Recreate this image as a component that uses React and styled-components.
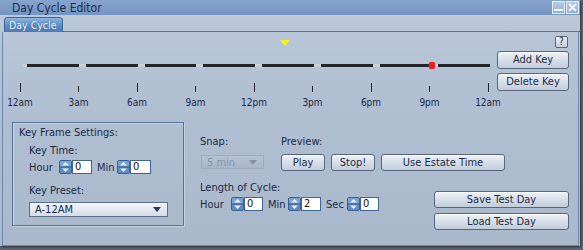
import styled, { createGlobalStyle } from "styled-components";

const GlobalStyle = createGlobalStyle`
  html, body {
    margin: 0;
    padding: 0;
  }
  body {
    width: 583px;
    height: 250px;
    overflow: hidden;
    background: #5d6570;
    font-family: "DejaVu Sans Condensed", "DejaVu Sans", "Liberation Sans", sans-serif;
    font-stretch: condensed;
    font-size: 11px;
    color: #1b2a44;
  }
`;

const HOURS = ["12am", "3am", "6am", "9am", "12pm", "3pm", "6pm", "9pm", "12am"];
const TRACK_START = 19;
const TRACK_WIDTH = 468;

const Window = styled.div`
  width: 580px;
  height: 246px;
  display: flex;
  flex-direction: column;
  background: linear-gradient(#bccadb, #b0bfd1 40%, #a9b8cb);
  box-shadow: 1px 1px 2px rgba(0, 0, 0, 0.5);
`;

const TitleBar = styled.div`
  height: 15px;
  display: flex;
  align-items: center;
  padding-left: 12px;
  background: linear-gradient(#87a4cd, #7393c2);
  font-size: 12px;
  color: #1a2b4e;
`;

const TitleText = styled.span`
  flex: 1;
`;

const TitleIcons = styled.div`
  display: flex;
  gap: 1px;
  margin-right: 1px;
`;

const TitleIcon = styled.div`
  width: 13px;
  height: 13px;
  box-sizing: border-box;
  border: 1px solid #e6eef8;
  background: linear-gradient(#b7cde6, #8fb0d6);
  display: flex;
  align-items: center;
  justify-content: center;
`;

const TabStrip = styled.div`
  display: flex;
  align-items: flex-end;
  height: 17px;
  padding-left: 4px;
`;

const Tab = styled.div`
  width: 59px;
  height: 15px;
  box-sizing: border-box;
  border: 1px solid #3c6499;
  border-bottom: none;
  border-radius: 4px 4px 0 0;
  background: linear-gradient(#8cb6e2, #5a8cc8 55%, #4a7bb9);
  color: #fff;
  text-shadow: 0 0 1px #1d3b66;
  padding-left: 4px;
  font-size: 10.5px;
  line-height: 14px;
`;

const TabLine = styled.div`
  flex: 1;
  height: 1px;
  background: #4f74a6;
`;

const Panel = styled.div`
  flex: 1;
  margin: 0 1px 0 2px;
  border: 1px solid #6d88ae;
  border-top: none;
  display: flex;
  flex-direction: column;
`;

const TopRow = styled.div`
  height: 86px;
  display: flex;
`;

const Timeline = styled.div`
  position: relative;
  width: 494px;
`;

const Track = styled.div`
  position: relative;
  display: flex;
  margin: 32px 0 0 ${TRACK_START}px;
  width: ${TRACK_WIDTH}px;
  height: 3px;
  background: #c9ced4;
`;

const Segment = styled.div`
  flex: 1;
  margin-left: ${(p) => (p.$first ? 5 : 7)}px;
  background: #222427;
`;

const KeyDot = styled.div`
  position: absolute;
  top: -2px;
  width: 6px;
  height: 7px;
  margin-left: -3px;
  border-radius: 2px;
  background: #f01c1c;
  box-shadow: 0 0 1px #ff5a5a;
`;

const TimeMarker = styled.svg`
  position: absolute;
  top: 8px;
  margin-left: -5px;
`;

const Scale = styled.div`
  display: flex;
  justify-content: space-between;
  width: ${TRACK_WIDTH + 30}px;
  margin: 16px 0 0 2px;
`;

const ScaleItem = styled.div`
  width: 30px;
  display: flex;
  flex-direction: column;
  align-items: center;
`;

const Tick = styled.div`
  width: 1px;
  height: ${(p) => (p.$major ? 9 : 6)}px;
  margin-top: ${(p) => (p.$major ? 0 : 3)}px;
  background: #1f2226;
`;

const TickLabel = styled.div`
  margin-top: 5px;
  font-size: 10px;
  line-height: 12px;
`;

const SideCol = styled.div`
  width: 72px;
  display: flex;
  flex-direction: column;
  align-items: flex-end;
`;

const Button = styled.button`
  box-sizing: border-box;
  width: ${(p) => p.$w}px;
  height: ${(p) => p.$h || 16}px;
  margin: 0;
  padding: 0;
  border: 1px solid #55667d;
  border-radius: 3px;
  background: linear-gradient(#eef3f8, #d6dee8 50%, #c2cdda);
  box-shadow: inset 0 1px 0 #fbfdff;
  font-family: inherit;
  font-stretch: condensed;
  font-size: 11px;
  color: #1b2b45;
  line-height: 14px;
`;

const HelpButton = styled(Button)`
  margin: 4px 1px 0 0;
  width: 13px;
  height: 12px;
  font-size: 10px;
  line-height: 10px;
  border-radius: 2px;
`;

const SideButton = styled(Button)`
  margin: ${(p) => p.$mt}px 0 0 0;
`;

const BottomRow = styled.div`
  flex: 1;
  display: flex;
`;

const GroupBox = styled.div`
  margin: 4px 0 0 9px;
  width: 172px;
  height: 104px;
  box-sizing: border-box;
  border: 1px solid #58739b;
  box-shadow: 1px 1px 0 #c6d2e0, inset 1px 1px 0 #c6d2e0;
  padding: 3px 0 0 6px;
`;

const Label = styled.div`
  line-height: 13px;
  margin: ${(p) => p.$m || 0};
`;

const FieldRow = styled.div`
  display: flex;
  align-items: center;
  margin: ${(p) => p.$m || 0};
`;

const FieldLabel = styled.span`
  width: ${(p) => p.$w}px;
`;

const SpinBox = styled.svg`
  display: block;
  flex: none;
`;

const NumInput = styled.div`
  box-sizing: border-box;
  width: ${(p) => p.$w}px;
  height: 14px;
  border: 1px solid #3f6496;
  background: #fff;
  padding-left: 2px;
  line-height: 12px;
  color: #111;
`;

const Dropdown = styled.div`
  box-sizing: border-box;
  width: ${(p) => p.$w}px;
  height: ${(p) => p.$h}px;
  display: flex;
  align-items: center;
  justify-content: space-between;
  padding: 0 6px 0 5px;
  border: 1px solid ${(p) => (p.$disabled ? "#9eabbd" : "#5d6f88")};
  background: ${(p) =>
    p.$disabled ? "linear-gradient(#b5c2d3, #a8b6c9)" : "linear-gradient(#f2f5f9, #d4dce6)"};
  color: ${(p) => (p.$disabled ? "#8593a6" : "#1b2a44")};
  margin: ${(p) => p.$m || 0};
`;

const Caret = styled.svg`
  display: block;
`;

const RightArea = styled.div`
  flex: 1;
  display: flex;
  flex-direction: column;
  margin-left: 16px;
`;

const PreviewRow = styled.div`
  display: flex;
  margin-top: 17px;
`;

const SnapCol = styled.div`
  width: 81px;
  display: flex;
  flex-direction: column;
`;

const PreviewCol = styled.div`
  display: flex;
  flex-direction: column;
`;

const ButtonRow = styled.div`
  display: flex;
  gap: 6px;
  margin-top: 6px;
`;

const LowerRow = styled.div`
  display: flex;
  justify-content: space-between;
`;

const CycleCol = styled.div`
  display: flex;
  flex-direction: column;
`;

const FileCol = styled.div`
  display: flex;
  flex-direction: column;
  gap: 5px;
  margin: 20px 9px 0 0;
`;

function Spinner() {
  return (
    <SpinBox width="13" height="14" viewBox="0 0 13 14">
      <rect x="0.5" y="0.5" width="12" height="13" rx="1.5" fill="#5f8cc2" stroke="#3a6194" />
      <rect x="1" y="1" width="11" height="5.5" fill="#7aa3d3" />
      <line x1="1" y1="7" x2="12" y2="7" stroke="#34598a" />
      <path d="M3 5.5 L6.5 2 L10 5.5 Z" fill="#e4edf8" />
      <path d="M3 8.5 L6.5 12 L10 8.5 Z" fill="#e4edf8" />
    </SpinBox>
  );
}

function NumberField({ label, labelWidth, value, inputWidth }) {
  return (
    <>
      <FieldLabel $w={labelWidth}>{label}</FieldLabel>
      <Spinner />
      <NumInput $w={inputWidth}>{value}</NumInput>
    </>
  );
}

function DropCaret({ color }) {
  return (
    <Caret width="8" height="5" viewBox="0 0 8 5">
      <path d="M0 0 H8 L4 5 Z" fill={color} />
    </Caret>
  );
}

export default function App() {
  const currentTime = 13.5;
  const keyTimes = [21];
  const toX = (h) => TRACK_START + (h / 24) * TRACK_WIDTH;

  return (
    <>
      <GlobalStyle />
      <Window>
        <TitleBar>
          <TitleText>Day Cycle Editor</TitleText>
          <TitleIcons>
            <TitleIcon>
              <svg width="9" height="9" viewBox="0 0 9 9">
                <rect x="0" y="6" width="9" height="2" fill="#f2f6fb" />
              </svg>
            </TitleIcon>
            <TitleIcon>
              <svg width="9" height="9" viewBox="0 0 9 9">
                <path d="M1 1 L8 8 M8 1 L1 8" stroke="#f2f6fb" strokeWidth="1.8" />
              </svg>
            </TitleIcon>
          </TitleIcons>
        </TitleBar>

        <TabStrip>
          <Tab>Day Cycle</Tab>
          <TabLine />
        </TabStrip>

        <Panel>
          <TopRow>
            <Timeline>
              <TimeMarker
                width="10"
                height="6"
                viewBox="0 0 10 6"
                style={{ left: toX(currentTime) }}
              >
                <path d="M0 0 H10 L5 6 Z" fill="#f4f020" />
              </TimeMarker>
              <Track>
                {Array.from({ length: 8 }).map((_, i) => (
                  <Segment key={i} $first={i === 0} />
                ))}
                {keyTimes.map((h) => (
                  <KeyDot key={h} style={{ left: toX(h) - TRACK_START }} />
                ))}
              </Track>
              <Scale>
                {HOURS.map((h, i) => (
                  <ScaleItem key={i}>
                    <Tick $major={i % 2 === 0} />
                    <TickLabel>{h}</TickLabel>
                  </ScaleItem>
                ))}
              </Scale>
            </Timeline>
            <SideCol>
              <HelpButton>?</HelpButton>
              <SideButton $w={72} $h={18} $mt={3}>Add Key</SideButton>
              <SideButton $w={72} $h={18} $mt={4}>Delete Key</SideButton>
            </SideCol>
          </TopRow>

          <BottomRow>
            <GroupBox>
              <Label>Key Frame Settings:</Label>
              <Label $m="5px 0 0 10px">Key Time:</Label>
              <FieldRow $m="3px 0 0 10px">
                <NumberField label="Hour" labelWidth={30} value="0" inputWidth={20} />
                <FieldLabel $w={5} />
                <NumberField label="Min" labelWidth={20} value="0" inputWidth={21} />
              </FieldRow>
              <Label $m="10px 0 0 10px">Key Preset:</Label>
              <Dropdown $w={139} $h={15} $m="5px 0 0 10px">
                <span>A-12AM</span>
                <DropCaret color="#2a3850" />
              </Dropdown>
            </GroupBox>

            <RightArea>
              <PreviewRow>
                <SnapCol>
                  <Label>Snap:</Label>
                  <Dropdown $w={63} $h={14} $m="7px 0 0 1px" $disabled>
                    <span>5 min</span>
                    <DropCaret color="#8593a6" />
                  </Dropdown>
                </SnapCol>
                <PreviewCol>
                  <Label>Preview:</Label>
                  <ButtonRow>
                    <Button $w={44} $h={17}>Play</Button>
                    <Button $w={44} $h={17}>Stop!</Button>
                    <Button $w={124} $h={17}>Use Estate Time</Button>
                  </ButtonRow>
                </PreviewCol>
              </PreviewRow>
              <LowerRow>
                <CycleCol>
                  <Label $m="10px 0 0 0">Length of Cycle:</Label>
                  <FieldRow $m="3px 0 0 0">
                    <NumberField label="Hour" labelWidth={31} value="0" inputWidth={19} />
                    <FieldLabel $w={5} />
                    <NumberField label="Min" labelWidth={20} value="2" inputWidth={20} />
                    <FieldLabel $w={5} />
                    <NumberField label="Sec" labelWidth={21} value="0" inputWidth={19} />
                  </FieldRow>
                </CycleCol>
                <FileCol>
                  <Button $w={135} $h={17}>Save Test Day</Button>
                  <Button $w={135} $h={17}>Load Test Day</Button>
                </FileCol>
              </LowerRow>
            </RightArea>
          </BottomRow>
        </Panel>
      </Window>
    </>
  );
}
